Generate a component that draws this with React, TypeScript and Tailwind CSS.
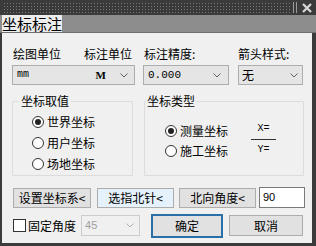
import React from 'react'

const cjk = "font-['Noto_Sans_CJK_SC','Microsoft_YaHei',sans-serif]"
const mono = "font-['Liberation_Mono',monospace]"
const btnCls = 'shrink-0 whitespace-nowrap h-[20px] flex items-center justify-center border border-[#adadad] bg-[#e1e1e1] text-[12px] leading-none text-black'
const selectCls = 'h-[20px] flex items-center border border-[#adadad] bg-[#e5e5e5] text-[12px] leading-none text-black'

function Chevron({ color = '#606060' }: { color?: string }) {
  return (
    <svg width="8" height="5" viewBox="0 0 8 5" className="shrink-0">
      <polyline points="0.5,0.5 4,4 7.5,0.5" fill="none" stroke={color} strokeWidth="1" />
    </svg>
  )
}

function Radio({ checked, label }: { checked?: boolean; label: string }) {
  return (
    <div className="flex items-center h-[16px] gap-[3px] whitespace-nowrap">
      <span className="shrink-0 w-[12px] h-[12px] rounded-full border border-[#333] bg-white flex items-center justify-center">
        {checked && <span className="w-[6px] h-[6px] rounded-full bg-[#222]" />}
      </span>
      <span className="text-[12px] leading-none">{label}</span>
    </div>
  )
}

export default function App() {
  return (
    <div className={`w-[316px] h-[246px] bg-[#3b3b3b] flex flex-col overflow-hidden text-black ${cjk}`}>
      {/* title bar */}
      <div className="h-[15px] flex items-center pl-[3px] pr-[4px] gap-[3px]">
        <div className="flex-1 h-[11px] bg-[#3a3a3a] bg-[radial-gradient(circle,#777_0.7px,transparent_1px)] bg-[length:3px_3px]" />
        <div className="flex gap-[2px] h-[11px]">
          <span className="w-[1px] h-full bg-[#9a9a9a]" />
          <span className="w-[1px] h-full bg-[#9a9a9a]" />
        </div>
        <svg width="10" height="10" viewBox="0 0 10 10" className="ml-[2px]">
          <path d="M1,1 L9,9 M9,1 L1,9" stroke="#d8d8d8" strokeWidth="2.2" />
        </svg>
      </div>

      {/* tab strip */}
      <div className="h-[18px] bg-[#8d8d8d] flex items-end pl-[2px] border-b border-[#6f6f6f]">
        <div className="h-[17px] w-[60px] bg-[#ededed] flex items-center justify-center text-[15px] leading-none whitespace-nowrap">
          坐标标注
        </div>
      </div>

      {/* body */}
      <div className="flex-1 ml-[2px] mr-[4px] mb-[3px] bg-[#f0f0f0] pl-[10px] pr-[8px] pt-[13px] flex flex-col">
        <div className="flex">
          <div className="w-[123px] shrink-0 flex flex-col">
            <div className="flex justify-between pl-[1px] pr-[3px] h-[16px] items-center text-[12px] leading-none whitespace-nowrap">
              <span>绘图单位</span>
              <span>标注单位</span>
            </div>
            <div className={`${selectCls} mt-[3px] pl-[4px] pr-[6px]`}>
              <span className={`${mono} text-[10px]`}>mm</span>
              <span className="flex-1" />
              <span className="font-['Liberation_Serif',serif] font-bold text-[11px] mr-[14px]">M</span>
              <Chevron />
            </div>
          </div>
          <div className="w-[86px] shrink-0 ml-[8px] flex flex-col">
            <div className="h-[16px] flex items-center pl-[1px] text-[12px] leading-none whitespace-nowrap">标注精度:</div>
            <div className={`${selectCls} mt-[3px] pl-[4px] pr-[7px] justify-between`}>
              <span className={`${mono} text-[11px]`}>0.000</span>
              <Chevron />
            </div>
          </div>
          <div className="w-[65px] shrink-0 ml-[9px] flex flex-col">
            <div className="h-[16px] flex items-center text-[12px] leading-none whitespace-nowrap">箭头样式:</div>
            <div className={`${selectCls} mt-[3px] pl-[3px] pr-[4px] justify-between`}>
              <span className="text-[12px]">无</span>
              <Chevron />
            </div>
          </div>
        </div>

        {/* group boxes */}
        <div className="flex mt-[16px] h-[75px]">
          <div className="relative shrink-0 w-[121px] h-full border border-[#dcdcdc] rounded-[1px] pl-[19px] pt-[12px] flex flex-col gap-[5px]">
            <span className="absolute -top-[8px] left-[6px] bg-[#f0f0f0] px-[2px] text-[12px] leading-[14px] whitespace-nowrap">坐标取值</span>
            <Radio checked label="世界坐标" />
            <Radio label="用户坐标" />
            <Radio label="场地坐标" />
          </div>
          <div className="relative shrink-0 ml-[11px] w-[160px] h-full border border-[#dcdcdc] rounded-[1px] pl-[20px] pt-[21px] flex">
            <span className="absolute -top-[8px] left-[1px] bg-[#f0f0f0] px-[1px] text-[12px] leading-[14px] whitespace-nowrap">坐标类型</span>
            <div className="flex flex-col gap-[4px]">
              <Radio checked label="测量坐标" />
              <Radio label="施工坐标" />
            </div>
            <div className={`ml-[23px] w-[25px] flex flex-col items-center ${mono} text-[10px] leading-none`}>
              <span className="h-[12px] flex items-center">X=</span>
              <span className="w-full h-[1px] bg-[#333] my-[4px]" />
              <span className="h-[12px] flex items-center">Y=</span>
            </div>
          </div>
        </div>

        {/* button row */}
        <div className="flex items-center mt-[11px]">
          <div className={`${btnCls} w-[78px] ml-[1px]`}>设置坐标系&lt;</div>
          <div className={`${btnCls} w-[77px] ml-[6px] bg-[#e5f1fb] border-[#0078d7]`}>选指北针&lt;</div>
          <div className={`${btnCls} w-[77px] ml-[5px]`}>北向角度&lt;</div>
          <div className="shrink-0 h-[21px] w-[46px] ml-[3px] border border-[#7a7a7a] bg-white flex items-center pl-[3px] font-['Liberation_Sans',sans-serif] text-[11px]">90</div>
        </div>

        {/* bottom row */}
        <div className="flex items-center mt-[5px] h-[25px]">
          <span className="shrink-0 w-[13px] h-[13px] ml-[1px] border border-[#333] bg-white" />
          <span className="shrink-0 ml-[2px] text-[12px] leading-none whitespace-nowrap">固定角度</span>
          <div className="shrink-0 ml-[5px] w-[59px] h-[21px] border border-[#cccccc] bg-[#f0f0f0] flex items-center justify-between pl-[3px] pr-[5px]">
            <span className="font-['Liberation_Sans',sans-serif] text-[11px] text-[#a0a0a0]">45</span>
            <Chevron color="#b0b0b0" />
          </div>
          <div className="shrink-0 ml-[11px] w-[72px] h-[24px] border-2 border-[#2a6fa8] bg-[#e1e1e1] flex items-center justify-center text-[12px] leading-none">确定</div>
          <div className={`${btnCls} w-[74px] h-[21px] ml-[6px]`}>取消</div>
        </div>
      </div>
    </div>
  )
}
